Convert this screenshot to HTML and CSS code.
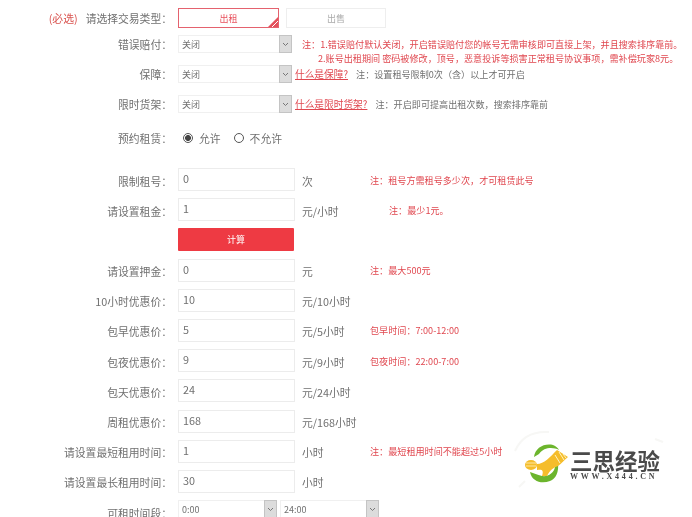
FILE: index.html
```html
<!DOCTYPE html>
<html lang="zh-CN">
<head>
<meta charset="utf-8">
<title>发布出租</title>
<link rel="stylesheet" href="styles.css">
</head>
<body>
<main class="form">
  <div class="row row-type">
    <div class="label"><span class="required">(必选)</span>请选择交易类型：</div>
    <div class="tab tab-on">出租<svg class="tab-corner" viewBox="0 0 10 10" width="10" height="10"><path d="M10 0V10H0z" fill="#e4505c"/><path d="M4 10L10 4" stroke="#fff" stroke-width="1"/></svg></div>
    <div class="tab tab-off">出售</div>
  </div>
  <div class="row row-select">
    <div class="label">错误赔付：</div>
    <div class="select"><span class="select-text">关闭</span><span class="arrow"><svg viewBox="0 0 13 18" width="13" height="18"><path d="M4 8l2.500 2.500L9 8" fill="none" stroke="#777" stroke-width="1"/></svg></span></div>
    <div class="note note-first">注：1.错误赔付默认关闭，开启错误赔付您的帐号无需审核即可直接上架，并且搜索排序靠前。<br><span class="note-indent">2.账号出租期间 密码被修改，顶号，恶意投诉等损害正常租号协议事项，需补偿玩家8元。</span></div>
  </div>
  <div class="row row-select">
    <div class="label">保障：</div>
    <div class="select"><span class="select-text">关闭</span><span class="arrow"><svg viewBox="0 0 13 18" width="13" height="18"><path d="M4 8l2.500 2.500L9 8" fill="none" stroke="#777" stroke-width="1"/></svg></span></div>
    <a class="help">什么是保障?</a>
    <div class="tip">注：设置租号限制0次（含）以上才可开启</div>
  </div>
  <div class="row row-select">
    <div class="label">限时货架：</div>
    <div class="select"><span class="select-text">关闭</span><span class="arrow"><svg viewBox="0 0 13 18" width="13" height="18"><path d="M4 8l2.500 2.500L9 8" fill="none" stroke="#777" stroke-width="1"/></svg></span></div>
    <a class="help">什么是限时货架?</a>
    <div class="tip">注：开启即可提高出租次数，搜索排序靠前</div>
  </div>
  <div class="row row-radio">
    <div class="label">预约租赁：</div>
    <div class="radios">
      <span class="radio radio-on"></span><span class="radio-text">允许</span>
      <span class="radio"></span><span class="radio-text">不允许</span>
    </div>
  </div>

  <div class="row row-input">
    <div class="label">限制租号：</div><div class="input">0</div><div class="unit">次</div><div class="note">注：租号方需租号多少次，才可租赁此号</div>
  </div>
  <div class="row row-input">
    <div class="label">请设置租金：</div><div class="input">1</div><div class="unit">元/小时</div><div class="note note-far">注：最少1元。</div>
  </div>
  <div class="row row-input">
    <div class="label"></div><button class="calc" type="button">计算</button>
  </div>
  <div class="row row-input">
    <div class="label">请设置押金：</div><div class="input">0</div><div class="unit">元</div><div class="note">注：最大500元</div>
  </div>
  <div class="row row-input">
    <div class="label">10小时优惠价：</div><div class="input">10</div><div class="unit">元/10小时</div>
  </div>
  <div class="row row-input">
    <div class="label">包早优惠价：</div><div class="input">5</div><div class="unit">元/5小时</div><div class="note">包早时间：7:00-12:00</div>
  </div>
  <div class="row row-input">
    <div class="label">包夜优惠价：</div><div class="input">9</div><div class="unit">元/9小时</div><div class="note">包夜时间：22:00-7:00</div>
  </div>
  <div class="row row-input">
    <div class="label">包天优惠价：</div><div class="input">24</div><div class="unit">元/24小时</div>
  </div>
  <div class="row row-input">
    <div class="label">周租优惠价：</div><div class="input">168</div><div class="unit">元/168小时</div>
  </div>
  <div class="row row-input">
    <div class="label">请设置最短租用时间：</div><div class="input">1</div><div class="unit">小时</div><div class="note">注：最短租用时间不能超过5小时</div>
  </div>
  <div class="row row-input">
    <div class="label">请设置最长租用时间：</div><div class="input">30</div><div class="unit">小时</div>
  </div>
  <div class="row row-input">
    <div class="label">可租时间段：</div>
    <div class="select select-time"><span class="select-text">0:00</span><span class="arrow"><svg viewBox="0 0 13 18" width="13" height="18"><path d="M4 8l2.500 2.500L9 8" fill="none" stroke="#777" stroke-width="1"/></svg></span></div>
    <div class="select select-time"><span class="select-text">24:00</span><span class="arrow"><svg viewBox="0 0 13 18" width="13" height="18"><path d="M4 8l2.500 2.500L9 8" fill="none" stroke="#777" stroke-width="1"/></svg></span></div>
  </div>
</main>

<aside class="logo">
  <svg class="logo-mark" viewBox="0 0 170 70" width="170" height="70">
    <path d="M10 26C16 12 28 6 44 7M150 14l8 3M14 62l6-6" fill="none" stroke="#f7f7f5" stroke-width="2"/>
    <g transform="translate(15 15)">
      <path d="M14 17C15 8 24 3 33 5c3 1 5 3 6 5C33 7 24 7 19 14z" fill="#6cb52d"/>
      <path d="M10 32c2 10 12 12 20 9 6-2 9-9 8-19l-3 5c-1 6-7 10-13 9-5-1-8-3-12-4z" fill="#6cb52d"/>
      <path d="M17 24c7 0 13-7 20-14l11 7c-4 3-7 7-10 9-5 2-8 4-11 10h-5c2-6 0-7-5-6z" fill="#f5bd2b"/>
      <path d="M39 12l5 8M35 15l5 8M43 14l3 4" stroke="#fff3c4" stroke-width="1"/>
      <ellipse cx="11" cy="25" rx="6" ry="5" fill="#f5bd2b"/>
      <path d="M6 23h10M6 26h10" stroke="#fff3c4" stroke-width=".8"/>
    </g>
  </svg>
  <div class="logo-text">
    <div class="logo-name">三思经验</div>
    <div class="logo-url">WWW.X444.CN</div>
  </div>
</aside>
</body>
</html>
```
FILE: styles.css
```css
html, body {
  margin: 0;
  padding: 0;
  height: 517px;
  overflow: hidden;
  background: #fff;
}
body {
  position: relative;
  font-family: "Noto Sans CJK SC", "Noto Sans", sans-serif;
  font-size: 10.800px;
  color: #707070;
}
.form {
  padding-top: 8px;
  filter: blur(0.35px);
}
.row {
  display: flex;
  align-items: center;
  white-space: nowrap;
}
.label {
  width: 172px;
  flex: none;
  margin-right: 6px;
  text-align: right;
}
.required {
  color: #d9534f;
  margin-right: 8px;
}
.row-type { height: 20px; margin-bottom: 7px; }
.row-select { height: 18px; margin-bottom: 12px; }
.row-radio { height: 20px; padding-top: 3px; margin-bottom: 20px; }
.row-input { height: 23px; margin-bottom: 7.200px; }
.row-input .label, .unit { padding-top: 2px; }

.tab {
  box-sizing: border-box;
  height: 20px;
  display: flex;
  align-items: center;
  justify-content: center;
  font-size: 9px;
  position: relative;
}
.tab-on {
  width: 101px;
  border: 1px solid #e4626e;
  color: #e8505c;
  margin-right: 7px;
}
.tab-off {
  width: 100px;
  border: 1px solid #eee;
  color: #aaa;
}
.tab-corner {
  position: absolute;
  right: 0;
  bottom: 0;
}
.select {
  box-sizing: border-box;
  width: 114px;
  height: 18px;
  flex: none;
  border: 1px solid #f0f0f0;
  display: flex;
  align-items: center;
  justify-content: space-between;
  font-size: 9px;
}
.select-text { padding-left: 3px; }
.arrow {
  width: 13px;
  height: 18px;
  margin: -1px -1px -1px 0;
  background: #dcdcdc;
  border: 1px solid #c4c4c4;
  box-sizing: border-box;
  display: flex;
  align-items: center;
  justify-content: center;
}
.arrow svg { flex: none; }
.select-time { width: 99px; margin-right: 3px; align-self: flex-start; }
.note {
  color: #e0474f;
  font-size: 9.100px;
}
.note-first {
  padding-left: 10px;
  align-self: flex-start;
  line-height: 14px;
  margin-top: 2px;
}
.note-indent { padding-left: 16px; }
.note-far { padding-left: 19px; }
.help {
  color: #e0474f;
  font-size: 9.700px;
  text-decoration: underline;
  margin-left: 3px;
  margin-right: 8px;
}
.tip {
  font-size: 9.100px;
}
.radios {
  display: flex;
  align-items: center;
  padding-left: 5px;
}
.radio {
  box-sizing: border-box;
  width: 10px;
  height: 10px;
  border: 1px solid #555;
  border-radius: 50%;
  margin-right: 6px;
  background: #fff;
}
.radio-on {
  background: radial-gradient(circle, #444 0 2.700px, #fff 3.200px);
}
.radio-text { margin-right: 13px; }
.input {
  box-sizing: border-box;
  width: 117px;
  height: 23px;
  flex: none;
  border: 1px solid #ececec;
  padding-left: 4px;
  padding-bottom: 3px;
  display: flex;
  align-items: center;
}
.unit {
  width: 68px;
  flex: none;
  padding-left: 7px;
}
.calc {
  box-sizing: border-box;
  width: 116px;
  height: 23px;
  border: 0;
  border-radius: 1px;
  background: #ee3a43;
  color: #fff;
  font-family: inherit;
  font-size: 9px;
  padding: 0;
}
.logo {
  position: absolute;
  left: 505px;
  top: 425px;
  width: 170px;
  height: 70px;
}
.logo-mark {
  position: absolute;
  left: 0;
  top: 0;
}
.logo-text {
  position: absolute;
  left: 65px;
  top: 24px;
  width: 100px;
  filter: blur(0.3px);
}
.logo-name {
  font-size: 22.500px;
  font-weight: 700;
  line-height: 23px;
  color: #4a4a4a;
}
.logo-url {
  font-family: "Liberation Serif", serif;
  font-weight: 700;
  font-size: 8px;
  line-height: 10px;
  letter-spacing: 2.800px;
  color: #4a4a4a;
}
```
